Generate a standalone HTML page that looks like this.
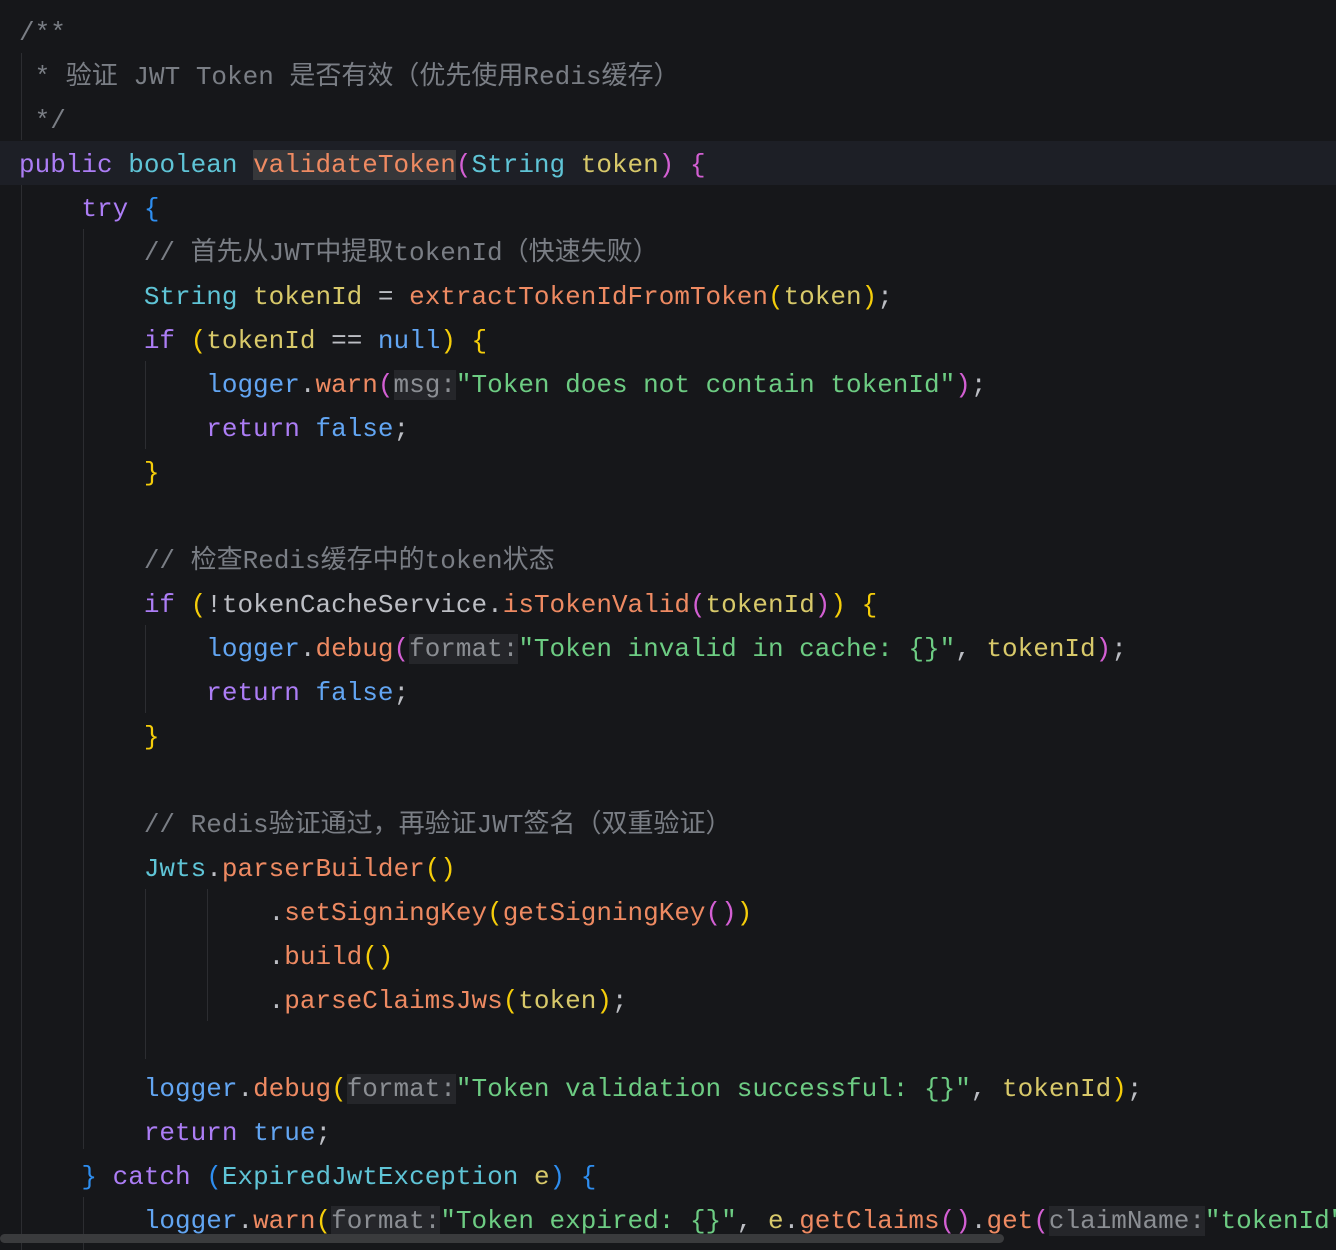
<!DOCTYPE html>
<html><head><meta charset="utf-8"><style>
html,body{margin:0;padding:0;width:1336px;height:1250px;overflow:hidden;background:#16171a;}
.l{position:absolute;left:19px;height:44px;line-height:44px;font-family:"Liberation Mono","Noto Sans CJK SC",monospace;font-size:26px;white-space:pre;color:#bcbec4;margin-top:2px;}
.hl{position:absolute;left:0;width:1336px;top:141px;height:44px;background:#1d1f26;}
.g{position:absolute;width:1px;background:#2c2d31;}
.c{color:#7a7e85}.k{color:#ac7df5}.t{color:#5fc4d6}.m{color:#ee8a62}.p{color:#d8c96a}.s{color:#6dcc83}.f{color:#62a5f2}.y{color:#f5cd0a}.pk{color:#d35fd3}.b{color:#2e8ef0}.d{color:#bcbec4}
.h{background:#25262a;color:#8b8e93}
.sel{background:#36373a}
</style></head><body>
<div class="hl"></div>
<div class="g" style="left:21px;top:53px;height:87px"></div>
<div class="g" style="left:21px;top:185px;height:1065px"></div>
<div class="g" style="left:83px;top:229px;height:920px"></div>
<div class="g" style="left:83px;top:1197px;height:53px"></div>
<div class="g" style="left:145px;top:361px;height:88px"></div>
<div class="g" style="left:145px;top:625px;height:88px"></div>
<div class="g" style="left:145px;top:889px;height:170px"></div>
<div class="g" style="left:207px;top:889px;height:132px"></div>
<div class="l c" style="top:9px">/**</div>
<div class="l c" style="top:53px"> * 验证 JWT Token 是否有效（优先使用Redis缓存）</div>
<div class="l c" style="top:97px"> */</div>
<div class="l" style="top:141px"><span class="k">public</span> <span class="t">boolean</span> <span class="m sel">validateToken</span><span class="pk">(</span><span class="t">String</span> <span class="p">token</span><span class="pk">)</span> <span class="pk">{</span></div>
<div class="l" style="top:185px">    <span class="k">try</span> <span class="b">{</span></div>
<div class="l c" style="top:229px">        // 首先从JWT中提取tokenId（快速失败）</div>
<div class="l" style="top:273px">        <span class="t">String</span> <span class="p">tokenId</span> = <span class="m">extractTokenIdFromToken</span><span class="y">(</span><span class="p">token</span><span class="y">)</span>;</div>
<div class="l" style="top:317px">        <span class="k">if</span> <span class="y">(</span><span class="p">tokenId</span> == <span class="f">null</span><span class="y">)</span> <span class="y">{</span></div>
<div class="l" style="top:361px">            <span class="f">logger</span>.<span class="m">warn</span><span class="pk">(</span><span class="h">msg:</span><span class="s">"Token does not contain tokenId"</span><span class="pk">)</span>;</div>
<div class="l" style="top:405px">            <span class="k">return</span> <span class="f">false</span>;</div>
<div class="l" style="top:449px">        <span class="y">}</span></div>
<div class="l c" style="top:537px">        // 检查Redis缓存中的token状态</div>
<div class="l" style="top:581px">        <span class="k">if</span> <span class="y">(</span>!<span class="d">tokenCacheService</span>.<span class="m">isTokenValid</span><span class="pk">(</span><span class="p">tokenId</span><span class="pk">)</span><span class="y">)</span> <span class="y">{</span></div>
<div class="l" style="top:625px">            <span class="f">logger</span>.<span class="m">debug</span><span class="pk">(</span><span class="h">format:</span><span class="s">"Token invalid in cache: {}"</span>, <span class="p">tokenId</span><span class="pk">)</span>;</div>
<div class="l" style="top:669px">            <span class="k">return</span> <span class="f">false</span>;</div>
<div class="l" style="top:713px">        <span class="y">}</span></div>
<div class="l c" style="top:801px">        // Redis验证通过，再验证JWT签名（双重验证）</div>
<div class="l" style="top:845px">        <span class="t">Jwts</span>.<span class="m">parserBuilder</span><span class="y">()</span></div>
<div class="l" style="top:889px">                .<span class="m">setSigningKey</span><span class="y">(</span><span class="m">getSigningKey</span><span class="pk">()</span><span class="y">)</span></div>
<div class="l" style="top:933px">                .<span class="m">build</span><span class="y">()</span></div>
<div class="l" style="top:977px">                .<span class="m">parseClaimsJws</span><span class="y">(</span><span class="p">token</span><span class="y">)</span>;</div>
<div class="l" style="top:1065px">        <span class="f">logger</span>.<span class="m">debug</span><span class="y">(</span><span class="h">format:</span><span class="s">"Token validation successful: {}"</span>, <span class="p">tokenId</span><span class="y">)</span>;</div>
<div class="l" style="top:1109px">        <span class="k">return</span> <span class="f">true</span>;</div>
<div class="l" style="top:1153px">    <span class="b">}</span> <span class="k">catch</span> <span class="b">(</span><span class="t">ExpiredJwtException</span> <span class="p">e</span><span class="b">)</span> <span class="b">{</span></div>
<div class="l" style="top:1197px">        <span class="f">logger</span>.<span class="m">warn</span><span class="y">(</span><span class="h">format:</span><span class="s">"Token expired: {}"</span>, <span class="p">e</span>.<span class="m">getClaims</span><span class="pk">()</span>.<span class="m">get</span><span class="pk">(</span><span class="h">claimName:</span><span class="s">"tokenId"</span><span class="pk">)</span>);</div>
<div style="position:absolute;left:0;top:1234px;width:1004px;height:9px;border-radius:5px;background:#3a3b3d"></div>
</body></html>
